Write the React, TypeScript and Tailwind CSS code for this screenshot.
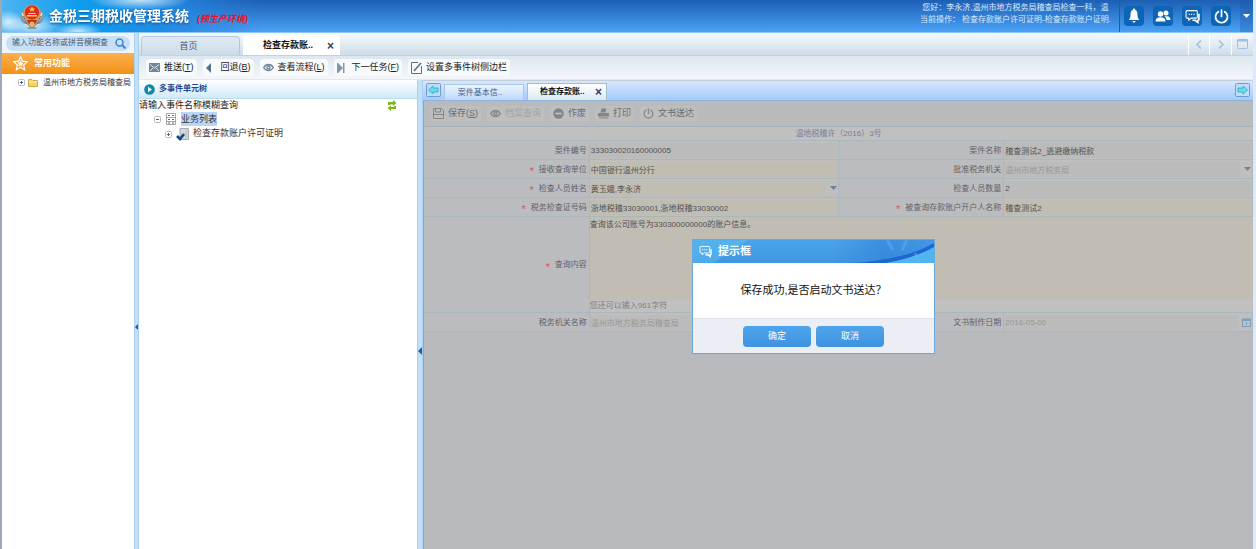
import { ReactNode } from 'react';

const Emblem = () => (
    <svg width="24" height="27" viewBox="0 0 24 27">
        <path d="M2 8 L0 14 L2 19 L6 22 L8 26 L16 26 L18 22 L22 19 L24 14 L22 8Z" fill="#8d97a3" />
        <path d="M2 10l4 9M22 10l-4 9M5 21l4 3M19 21l-4 3" stroke="#e3e7ea" strokeWidth="1.4" />
        <path d="M3.500 13l3 8M20.500 13l-3 8" stroke="#5f6a78" />
        <circle cx="12" cy="10" r="8.600" fill="#d8a33c" />
        <circle cx="12" cy="9.500" r="7.200" fill="#df2c1e" />
        <path d="M12 3.500l1 2h2l-1.6 1.3.6 2-2-1.2-2 1.2.6-2L9 5.500h2z" fill="#ffd75e" />
        <path d="M7 12h10v1.500H7zM8.500 10h7v1h-7z" fill="#ffd75e" />
        <path d="M7 17h10l-2 4H9z" fill="#c9281c" />
        <circle cx="12" cy="21" r="2.500" fill="#e9b94a" />
    </svg>
);

const Chat = ({ size = 14 }: { size?: number }) => (
    <svg width={size} height={size} viewBox="0 0 14 14" fill="none" stroke="#fff">
        <path d="M2 1.500h8.500a1 1 0 0 1 1 1v5a1 1 0 0 1-1 1H6l-2.500 2v-2H2a1 1 0 0 1-1-1v-5a1 1 0 0 1 1-1z" />
        <path d="M3.500 5h1M5.700 5h1M8 5h1" strokeWidth="1.300" />
        <path d="M13 4.500v5a1 1 0 0 1-1 1v2l-2.500-2H7" strokeWidth="1.500" />
    </svg>
);

const Bell = () => (
    <svg width="14" height="16" viewBox="0 0 14 16" fill="#fff">
        <path d="M7 .5a1.200 1.200 0 0 1 1.200 1.300C9.800 2.500 10.300 4 10.400 6c.1 3 .5 4.500 1.800 6H1.800c1.300-1.500 1.700-3 1.800-6 .1-2 .6-3.500 2.200-4.200A1.200 1.200 0 0 1 7 .5z" />
        <path d="M5.200 13h3.600L7 15z" />
    </svg>
);

const People = () => (
    <svg width="16" height="14" viewBox="0 0 16 14" fill="#fff">
        <circle cx="11" cy="4" r="2.500" />
        <path d="M9.500 7.500c4-1 6 .5 6 3.500h-4c0-1.500-.8-2.500-2-3.500z" />
        <circle cx="5.500" cy="5" r="2.700" />
        <path d="M.5 12.500c0-3 2-4.300 5-4.300s5 1.300 5 4.300z" />
    </svg>
);

const Power = ({ size, color }: { size: number; color: string }) => (
    <svg width={size} height={size} viewBox="0 0 14 14" fill="none" stroke={color} strokeWidth="1.600" strokeLinecap="round">
        <path d="M7 1v6M4 2.500a5.600 5.600 0 1 0 6 0" />
    </svg>
);

const Mail = () => (
    <svg width="11" height="9" viewBox="0 0 11 9">
        <rect width="11" height="9" fill="#6c8799" />
        <path d="M1 1.500l4.500 3.500L10 1.500M1 8l3-3M10 8L7 5" stroke="#dfe9ef" fill="none" />
    </svg>
);

const Back = () => (
    <svg width="11" height="10" viewBox="0 0 11 10">
        <path d="M5 0v10L0 5z" fill="#55748a" />
    </svg>
);

const Eye = ({ color }: { color: string }) => (
    <svg width="11" height="9" viewBox="0 0 11 9" fill="none" stroke={color} strokeWidth="1.400">
        <path d="M.7 4.500C3 .4 8 .4 10.300 4.500 8 8.600 3 8.600.7 4.500z" />
        <circle cx="5.500" cy="4.500" r="1.500" />
    </svg>
);

const Next = () => (
    <svg width="11" height="10" viewBox="0 0 11 10">
        <path d="M0 0h1v10H0zM1 0v10l5-5zM6 0h1.500v10H6z" fill="#7f97a7" />
    </svg>
);

const Edit = () => (
    <svg width="11" height="12" viewBox="0 0 11 12" fill="none" stroke="#587488">
        <path d="M7 .5H.5v11h10V4" />
        <path d="M3 9l7-8" strokeWidth="1.600" />
    </svg>
);

const Save = () => (
    <svg width="11" height="11" viewBox="0 0 11 11" fill="none" stroke="#7f868c">
        <path d="M.5.5h8l2 2v8H.5zM2.500.5v3.500h5V.5M.5 6.500h10" />
    </svg>
);

const Minus = () => (
    <svg width="11" height="11" viewBox="0 0 11 11">
        <circle cx="5.500" cy="5.500" r="5.200" fill="#7f868c" />
        <path d="M2.500 5.500h6" stroke="#c4c4c4" strokeWidth="1.600" />
    </svg>
);

const Printer = () => (
    <svg width="11" height="11" viewBox="0 0 11 11" fill="#7f868c">
        <path d="M3.500.5h5l-1 4H2.500zM0 5h11v3.500H0zM1 9.500h9v1H1z" />
    </svg>
);

const Star = () => (
    <svg width="15" height="15" viewBox="0 0 15 15" fill="none" stroke="#fff">
        <path d="M7.500.8l2 4.400 4.800.5-3.600 3.200 1 4.800-4.200-2.400-4.200 2.400 1-4.800L.7 5.700l4.800-.5z" strokeWidth="1.200" />
        <path d="M7.500 4.500l1 2 2 .3-1.500 1.400.4 2-1.900-1-1.900 1 .4-2-1.500-1.400 2-.3z" fill="#fff" strokeWidth=".3" />
    </svg>
);

const Expander = ({ open }: { open?: boolean }) => (
    <svg width="7" height="7" viewBox="0 0 7 7" fill="none">
        <rect x=".5" y=".5" width="6" height="6" rx="1" fill="#fff" stroke="#b4bac4" />
        <path d={open ? 'M2 3.500h3' : 'M2 3.500h3M3.500 2v3'} stroke="#4c5f96" />
    </svg>
);

const Folder = () => (
    <svg width="10" height="9" viewBox="0 0 10 9">
        <path d="M.5 1.500h3.500l1 1h4.500v6h-9z" fill="#f5d264" stroke="#c59a2c" strokeWidth=".8" />
        <path d="M1 4h8" stroke="#fff3bd" />
    </svg>
);

const ListIcon = () => (
    <svg width="10" height="12" viewBox="0 0 10 12" fill="none" stroke="#a5a5a5">
        <path d="M.5.5h9v11h-9zM.5 4.500h9M.5 8.500h9" />
        <path d="M2 2.500h2M6 2.500h2M2 6.500h2M6 6.500h2M2 10h2M6 10h2" stroke="#666" />
    </svg>
);

const DocCheck = () => (
    <svg width="13" height="13" viewBox="0 0 13 13">
        <path d="M4 .5h8.500v11H4z" fill="#d5d8db" stroke="#a7abb0" />
        <path d="M10 2v8" stroke="#bbb" />
        <path d="M1 8l3 3 4-5" stroke="#16477f" strokeWidth="2.600" fill="none" />
    </svg>
);

const PlayDot = () => (
    <svg width="11" height="11" viewBox="0 0 11 11">
        <circle cx="5.500" cy="5.500" r="5.300" fill="#1486a8" />
        <path d="M4 2.800v5.400l4-2.700z" fill="#fff" />
    </svg>
);

const Refresh = () => (
    <svg width="10" height="11" viewBox="0 0 10 11" fill="#7fb51c">
        <path d="M1 5V2h5V0l3.500 3L6 6V4.500H3V5z" />
        <path d="M9 6v3H4v2L.5 8 4 5.500V7h3V6z" />
    </svg>
);

const BoxArrow = ({ flip }: { flip?: boolean }) => (
    <svg className={flip ? 'rotate-180' : ''} width="15" height="14" viewBox="0 0 15 14">
        <rect x=".5" y=".5" width="14" height="13" rx="1" fill="#bcdcfa" stroke="#6f9cc9" />
        <path d="M2.500 7L7 3v2h5v4H7v2z" fill="#5fe0ea" stroke="#3f9fc0" strokeWidth=".8" />
    </svg>
);

const Calendar = () => (
    <svg width="9" height="9" viewBox="0 0 9 9" fill="none" stroke="#7ea0bb">
        <rect x=".5" y="1" width="8" height="7.500" />
        <path d="M0 2h9" strokeWidth="2" />
        <path d="M4.500 4v3" />
    </svg>
);

const Caret = ({ color }: { color: string }) => (
    <svg width="7" height="4" viewBox="0 0 7 4">
        <path d="M0 0h7L3.500 4z" fill={color} />
    </svg>
);

const HeaderButton = ({ label, children }: { label: string; children: ReactNode }) => (
    <button aria-label={label} className="flex size-5 items-center justify-center rounded bg-[#0f65b5]">
        {children}
    </button>
);

const tools = [
    { icon: <Mail />, text: '推送', key: 'T' },
    { icon: <Back />, text: '回退', key: 'B' },
    { icon: <Eye color="#6c8799" />, text: '查看流程', key: 'L' },
    { icon: <Next />, text: '下一任务', key: 'F' },
    { icon: <Edit />, text: '设置多事件树侧边栏' },
];

const formTools = [
    { icon: <Save />, text: '保存', key: 'S' },
    { icon: <Eye color="#85898c" />, text: '档案查询', off: true },
    { icon: <Minus />, text: '作废' },
    { icon: <Printer />, text: '打印' },
    { icon: <Power size={11} color="#85898c" />, text: '文书送达' },
];

const Label = ({ id, text, required }: { id: string; text: string; required?: boolean }) => (
    <label
        htmlFor={id}
        className="flex items-center justify-end gap-[5px] border-r border-b border-[#aab7bd] bg-[#bbbcbf] pt-px pr-[2px] text-[#5f6267]"
    >
        {required && <span className="h-[9px] text-[11px] leading-3 text-[#d0585a]">*</span>}
        {text}
    </label>
);

type FieldProps = { id: string; value: string; tint?: boolean; off?: boolean; end?: ReactNode };

const Field = ({ id, value, tint, off, end }: FieldProps) => (
    <div className="flex h-[19px] items-center gap-1 border-r border-b border-[#aab7bd] bg-[#bfbfbf] pr-px">
        <input
            id={id}
            defaultValue={value}
            className={`h-[15px] min-w-0 flex-1 pl-px ${tint ? 'bg-[#c1bdb3]' : 'bg-[#bbbbbb]'} ${off ? 'text-[#989898]' : 'text-[#525252]'}`}
        />
        {end}
    </div>
);

const Header = () => (
    <header className="relative flex h-[33px] items-center border-b border-[#8cc4fd] bg-linear-to-b from-[#1d5fb4] to-[#4aa2f5] text-white">
        <svg className="absolute inset-y-0 left-0" width="260" height="32" viewBox="0 0 260 32">
            <defs>
                <linearGradient id="sky" x1="0" x2="1" y1="0" y2="0">
                    <stop offset="0" stopColor="#4db4f0" />
                    <stop offset=".3" stopColor="#0f9cec" />
                    <stop offset=".6" stopColor="#1f8ce4" />
                    <stop offset="1" stopColor="#2a80dc" stopOpacity="0" />
                </linearGradient>
                <radialGradient id="cloud">
                    <stop offset="0" stopColor="#fff" stopOpacity=".75" />
                    <stop offset="1" stopColor="#fff" stopOpacity="0" />
                </radialGradient>
            </defs>
            <rect width="260" height="32" fill="url(#sky)" />
            <ellipse cx="6" cy="22" rx="16" ry="12" fill="url(#cloud)" />
            <ellipse cx="30" cy="26" rx="30" ry="12" fill="url(#cloud)" />
            <ellipse cx="76" cy="31" rx="24" ry="8" fill="url(#cloud)" />
            <ellipse cx="138" cy="0" rx="50" ry="10" fill="url(#cloud)" />
        </svg>
        <div className="relative flex flex-1 items-center pl-[18px]">
            <Emblem />
            <h1 className="ml-[5px] text-[14px] font-bold drop-shadow-[0_1px_1px_#0b4a90]">金税三期税收管理系统</h1>
            <span className="mt-2 ml-2 text-[9px] font-bold text-[#f0101c] italic">(预生产环境)</span>
        </div>
        <div className="relative mr-2 pb-[5px] text-center text-[8px] leading-3 text-[#dcebfb]">
            <p>您好：李永济,温州市地方税务局稽查局检查一科，温</p>
            <p>当前操作： 检查存款账户许可证明-检查存款账户证明.</p>
        </div>
        <div className="relative flex h-full items-center gap-[9px] border-l border-[#1a5da8] pl-1">
            <HeaderButton label="消息"><Bell /></HeaderButton>
            <HeaderButton label="用户"><People /></HeaderButton>
            <HeaderButton label="会话"><Chat size={15} /></HeaderButton>
            <HeaderButton label="退出"><Power size={15} color="#fff" /></HeaderButton>
            <button aria-label="更多" className="flex h-full w-[13px] items-center justify-center bg-linear-to-b from-[#1c5cae] to-[#3a8bde]">
                <Caret color="#fff" />
            </button>
        </div>
    </header>
);

const Sidebar = () => (
    <aside className="flex w-[132px] shrink-0 flex-col overflow-hidden bg-white text-[8px]">
        <div className="flex h-5 items-center bg-[#eef5fc] px-1">
            <div className="flex h-[15px] w-full items-center rounded-full bg-[#c9dff6] pr-1 pl-[6px]">
                <input
                    aria-label="搜索功能"
                    placeholder="输入功能名称或拼音模糊查"
                    className="min-w-0 flex-1 placeholder:text-[#4a5b70]"
                />
                <svg width="11" height="11" viewBox="0 0 11 11" fill="none" stroke="#3f86d8" strokeWidth="1.500">
                    <circle cx="4.500" cy="4.500" r="3.500" />
                    <path d="M7 7l3.500 3.500" strokeWidth="2" />
                </svg>
            </div>
        </div>
        <div className="flex h-[21px] items-center gap-[6px] bg-linear-to-b from-[#fbb04c] to-[#f2900f] pl-[11px] text-[9px] font-bold text-white">
            <Star />
            常用功能
        </div>
        <div className="flex h-[17px] items-center gap-[3px] pl-4 whitespace-nowrap text-[#333]">
            <Expander />
            <Folder />
            <span className="pl-[2px]">温州市地方税务局稽查局</span>
        </div>
    </aside>
);

const Splitter = ({ wide }: { wide?: boolean }) => (
    <div className={`flex shrink-0 items-center border-x border-[#a9d0f2] bg-[#c4e0f8] pt-18 ${wide ? 'w-[6px]' : 'w-[5px]'}`}>
        <svg width="4" height="8" viewBox="0 0 4 8">
            <path d="M4 0v8L0 4z" fill="#1a5fa8" />
        </svg>
    </div>
);

const EventTree = () => (
    <section className="w-[278px] shrink-0 bg-white text-[9px] text-[#333]">
        <h2 className="flex h-[19px] items-center gap-1 border-b border-[#b9dcef] bg-linear-to-b from-white to-[#cfeaf8] pl-[5px] text-[8px] font-bold text-[#1c4795]">
            <PlayDot />
            多事件单元树
        </h2>
        <div className="flex h-[13px] items-center justify-between pr-5 text-[#222]">
            请输入事件名称模糊查询
            <button aria-label="刷新"><Refresh /></button>
        </div>
        <div className="flex h-[14px] items-center gap-[5px] pl-[15px]">
            <Expander open />
            <ListIcon />
            <span className="bg-[#b9d6f8] leading-[14px]">业务列表</span>
        </div>
        <div className="flex h-4 items-center gap-1 pl-[26px]">
            <Expander />
            <DocCheck />
            <span>检查存款账户许可证明</span>
        </div>
    </section>
);

const Dialog = () => (
    <div
        role="dialog"
        aria-label="提示框"
        className="absolute top-[138px] left-[268px] w-[243px] border border-[#6aa8dc] bg-white"
    >
        <div className="relative flex h-[23px] items-center bg-linear-to-b from-[#4aa4ea] to-[#3f97e0] pl-[6px] text-[11px] font-bold text-white">
            <svg className="absolute inset-0" width="241" height="23" viewBox="0 0 241 23">
                <defs>
                    <linearGradient id="swoosh" x1="0" x2="1" y1="0" y2="0">
                        <stop offset="0" stopColor="#2f80da" stopOpacity="0" />
                        <stop offset=".5" stopColor="#2f80da" stopOpacity=".6" />
                        <stop offset="1" stopColor="#2f80da" stopOpacity=".3" />
                    </linearGradient>
                </defs>
                <path d="M0 0h55L20 23H0z" fill="#5ec0f2" opacity=".5" />
                <path d="M140 0h101v4c-30 12-50 16-70 19h-31z" fill="url(#swoosh)" />
                <path d="M160 23c30-2 60-8 81-20v5c-16 7-30 12-46 15z" fill="#1f66d0" />
                <path d="M241 7v16h-48c18-3 34-8 48-16z" fill="#50b4ee" />
                <path d="M194 0l6 10M214 0l-5 10M222 13l4 10" stroke="#69b8f2" strokeWidth="3" opacity=".4" />
            </svg>
            <span className="relative flex items-center gap-[6px]">
                <Chat size={13} />
                提示框
            </span>
        </div>
        <p className="flex h-[55px] items-center justify-center text-[11px] text-[#111]">保存成功,是否启动文书送达？</p>
        <div className="flex h-[35px] items-center justify-center gap-[5px] border-t border-[#dde2ea] bg-[#ebeff5] text-[9px] text-white">
            <button className="h-[21px] w-[68px] rounded bg-linear-to-b from-[#4ea4ec] to-[#3f93df] pt-px">确定</button>
            <button className="h-[21px] w-[68px] rounded bg-linear-to-b from-[#4ea4ec] to-[#3f93df] pt-px">取消</button>
        </div>
    </div>
);

const CaseForm = () => (
    <div className="relative flex-1 border-l border-[#9aa5b0] bg-[#b8b9bd] text-[8px]">
        <div className="flex h-[26px] items-center gap-[6px] border-b border-[#a5b1ba] bg-[#b9babc] px-[6px] text-[9px] text-[#6a6d71]">
            {formTools.map((t) => (
                <button
                    key={t.text}
                    className={`flex h-4 items-center gap-1 rounded-sm bg-[#bebebe] px-[3px] ${t.off ? 'text-[#a2a4a6]' : ''}`}
                >
                    {t.icon}
                    <span>
                        {t.text}
                        {t.key && <>(<u>{t.key}</u>)</>}
                    </span>
                </button>
            ))}
        </div>
        <h3 className="h-[14px] border-b border-[#aab7bd] bg-[#c0c0c0] text-center leading-[14px] text-[#7380a0]">
            温地税稽许（2016）3号
        </h3>
        <form className="grid grid-cols-[2fr_3fr_2fr_3fr]">
            <Label id="caseNo" text="案件编号" />
            <Field id="caseNo" value="333030020160000005" />
            <Label id="caseName" text="案件名称" />
            <Field id="caseName" value="稽查测试2_逃避缴纳税款" />
            <Label id="unit" text="接收查询单位" required />
            <Field id="unit" value="中国银行温州分行" tint />
            <Label id="office" text="批准税务机关" />
            <Field id="office" value="温州市地方税务局" off end={<Caret color="#7c828a" />} />
            <Label id="staff" text="检查人员姓名" required />
            <Field id="staff" value="黄玉娥,李永济" tint end={<Caret color="#6f7f9f" />} />
            <Label id="count" text="检查人员数量" />
            <Field id="count" value="2" />
            <Label id="cert" text="税务检查证号码" required />
            <Field id="cert" value="浙地税稽33030001,浙地税稽33030002" tint />
            <Label id="holder" text="被查询存款账户开户人名称" required />
            <Field id="holder" value="稽查测试2" tint />
            <Label id="content" text="查询内容" required />
            <div className="col-span-3 flex flex-col border-b border-[#aab7bd] bg-[#c0c0c0]">
                <textarea
                    id="content"
                    defaultValue="查询该公司账号为330300000000的账户信息。"
                    className="h-[83px] w-full resize-none bg-[#c1bdb3] pt-[2px] leading-3 text-[#525252]"
                />
                <p className="leading-3 text-[#808080]">您还可以输入961字符</p>
            </div>
            <Label id="bureau" text="税务机关名称" />
            <Field id="bureau" value="温州市地方税务局稽查局" off />
            <Label id="date" text="文书制作日期" />
            <Field id="date" value="2016-05-06" off end={<Calendar />} />
        </form>
        <Dialog />
    </div>
);

const CasePanel = () => (
    <section className="flex min-w-0 flex-1 flex-col">
        <div className="flex h-[21px] items-end gap-[3px] border-t border-b border-t-[#c5ced8] border-b-[#8fb4dd] bg-linear-to-b from-[#d6e8fd] to-[#a3cbfb] px-[3px] text-[8px]">
            <button aria-label="向左" className="mb-[3px]"><BoxArrow /></button>
            <button className="h-4 w-20 border border-b-0 border-[#a8c6ea] bg-linear-to-b from-[#edf5fe] to-[#bcd9fb] pt-px pr-2 text-[#3d608c]">
                案件基本信..
            </button>
            <div className="flex h-[17px] w-20 items-center justify-between border border-b-0 border-[#9fbfce] bg-linear-to-b from-white to-[#d9eaee] pr-1 pl-3 font-bold text-[#111]">
                <button>检查存款账..</button>
                <button aria-label="关闭" className="text-[12px] leading-3 text-[#333d66]">×</button>
            </div>
            <button aria-label="向右" className="mb-[3px] ml-auto"><BoxArrow flip /></button>
        </div>
        <CaseForm />
    </section>
);

const TabBar = () => (
    <nav className="flex h-[23px] items-end gap-[3px] border-b border-[#bed3e4] bg-linear-to-b from-[#f7fafd] to-[#cfdde9] pl-[2px] text-[9px]">
        <button className="h-[19px] w-[99px] rounded-t border border-b-0 border-[#b3c8da] bg-linear-to-b from-[#e0eaf4] to-[#cddbe8] pt-[2px] pr-1 text-[#3f5a76]">
            首页
        </button>
        <div className="flex h-5 w-[97px] items-center justify-between rounded-t bg-white pt-[2px] pr-[6px] pl-5 font-bold text-[#111]">
            <button>检查存款账..</button>
            <button aria-label="关闭" className="text-[12px] leading-3 text-[#333d66]">×</button>
        </div>
        <div className="ml-auto flex h-full text-[#9dbedd]">
            <button aria-label="上一页" className="flex w-[21px] items-center justify-center border-l border-white">
                <svg width="6" height="9" viewBox="0 0 6 9" fill="none" stroke="currentColor" strokeWidth="1.500"><path d="M5 .5l-4 4 4 4" /></svg>
            </button>
            <button aria-label="下一页" className="flex w-[22px] items-center justify-center border-l border-white">
                <svg width="6" height="9" viewBox="0 0 6 9" fill="none" stroke="currentColor" strokeWidth="1.500"><path d="M1 .5l4 4-4 4" /></svg>
            </button>
            <button aria-label="最大化" className="flex w-[22px] items-center justify-center border-l border-white">
                <svg width="11" height="10" viewBox="0 0 11 10" fill="none" stroke="currentColor"><rect x=".5" y=".5" width="10" height="9" rx="1" /><path d="M0 1.500h11" strokeWidth="2" /></svg>
            </button>
        </div>
    </nav>
);

const App = () => (
    <div className="flex min-h-screen flex-col border-r-3 border-l-2 border-r-[#deeafa] border-l-[#a3a9b2] bg-white font-['Liberation_Sans','Noto_Sans_CJK_SC',sans-serif] whitespace-nowrap">
        <Header />
        <div className="flex flex-1">
            <Sidebar />
            <Splitter />
            <main className="flex min-w-0 flex-1 flex-col">
                <TabBar />
                <div className="flex h-6 items-center gap-[6px] border-b border-[#dfe9ef] bg-linear-to-b from-[#dde7ef] to-[#f4f7fb] px-[7px] text-[9px] text-[#222]">
                    {tools.map((t) => (
                        <button key={t.text} className="flex h-[17px] items-center gap-1 rounded-sm bg-[#f8fafc] px-[3px]">
                            {t.icon}
                            <span>
                                {t.text}
                                {t.key && <>(<u>{t.key}</u>)</>}
                            </span>
                        </button>
                    ))}
                </div>
                <div className="flex flex-1">
                    <EventTree />
                    <Splitter wide />
                    <CasePanel />
                </div>
            </main>
        </div>
    </div>
);

export default App;
